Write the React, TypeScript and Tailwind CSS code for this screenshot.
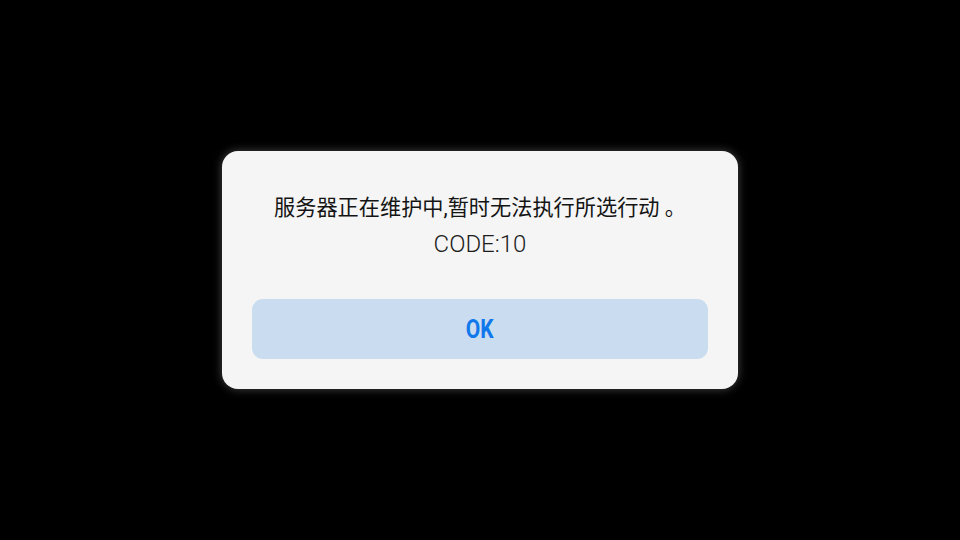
import React from "react";

export default function App() {
  return (
    <div className="w-[960px] h-[540px] bg-black flex items-center justify-center">
      <div className="w-[516px] h-[238px] bg-[#f5f5f5] rounded-[16px] shadow-[0_0_10px_rgba(255,255,255,0.28)] flex flex-col items-center pt-[42px] px-[30px] pb-[30px] font-['Roboto','Noto_Sans_CJK_SC',sans-serif]">
        <div className="text-[21.2px] leading-[30px] text-[#141414] whitespace-nowrap">
          服务器正在维护中,暂时无法执行所选行动 。
        </div>
        <div className="mt-[6px] text-[24px] leading-[30px] font-light text-[#1c1c1c]">CODE:10</div>
        <button className="mt-[40px] w-full h-[60px] rounded-[11px] bg-[#cadcf0] flex items-center justify-center">
          <span className="inline-block text-[25px] leading-none font-bold text-[#1178ec] scale-x-[0.84]">OK</span>
        </button>
      </div>
    </div>
  );
}
